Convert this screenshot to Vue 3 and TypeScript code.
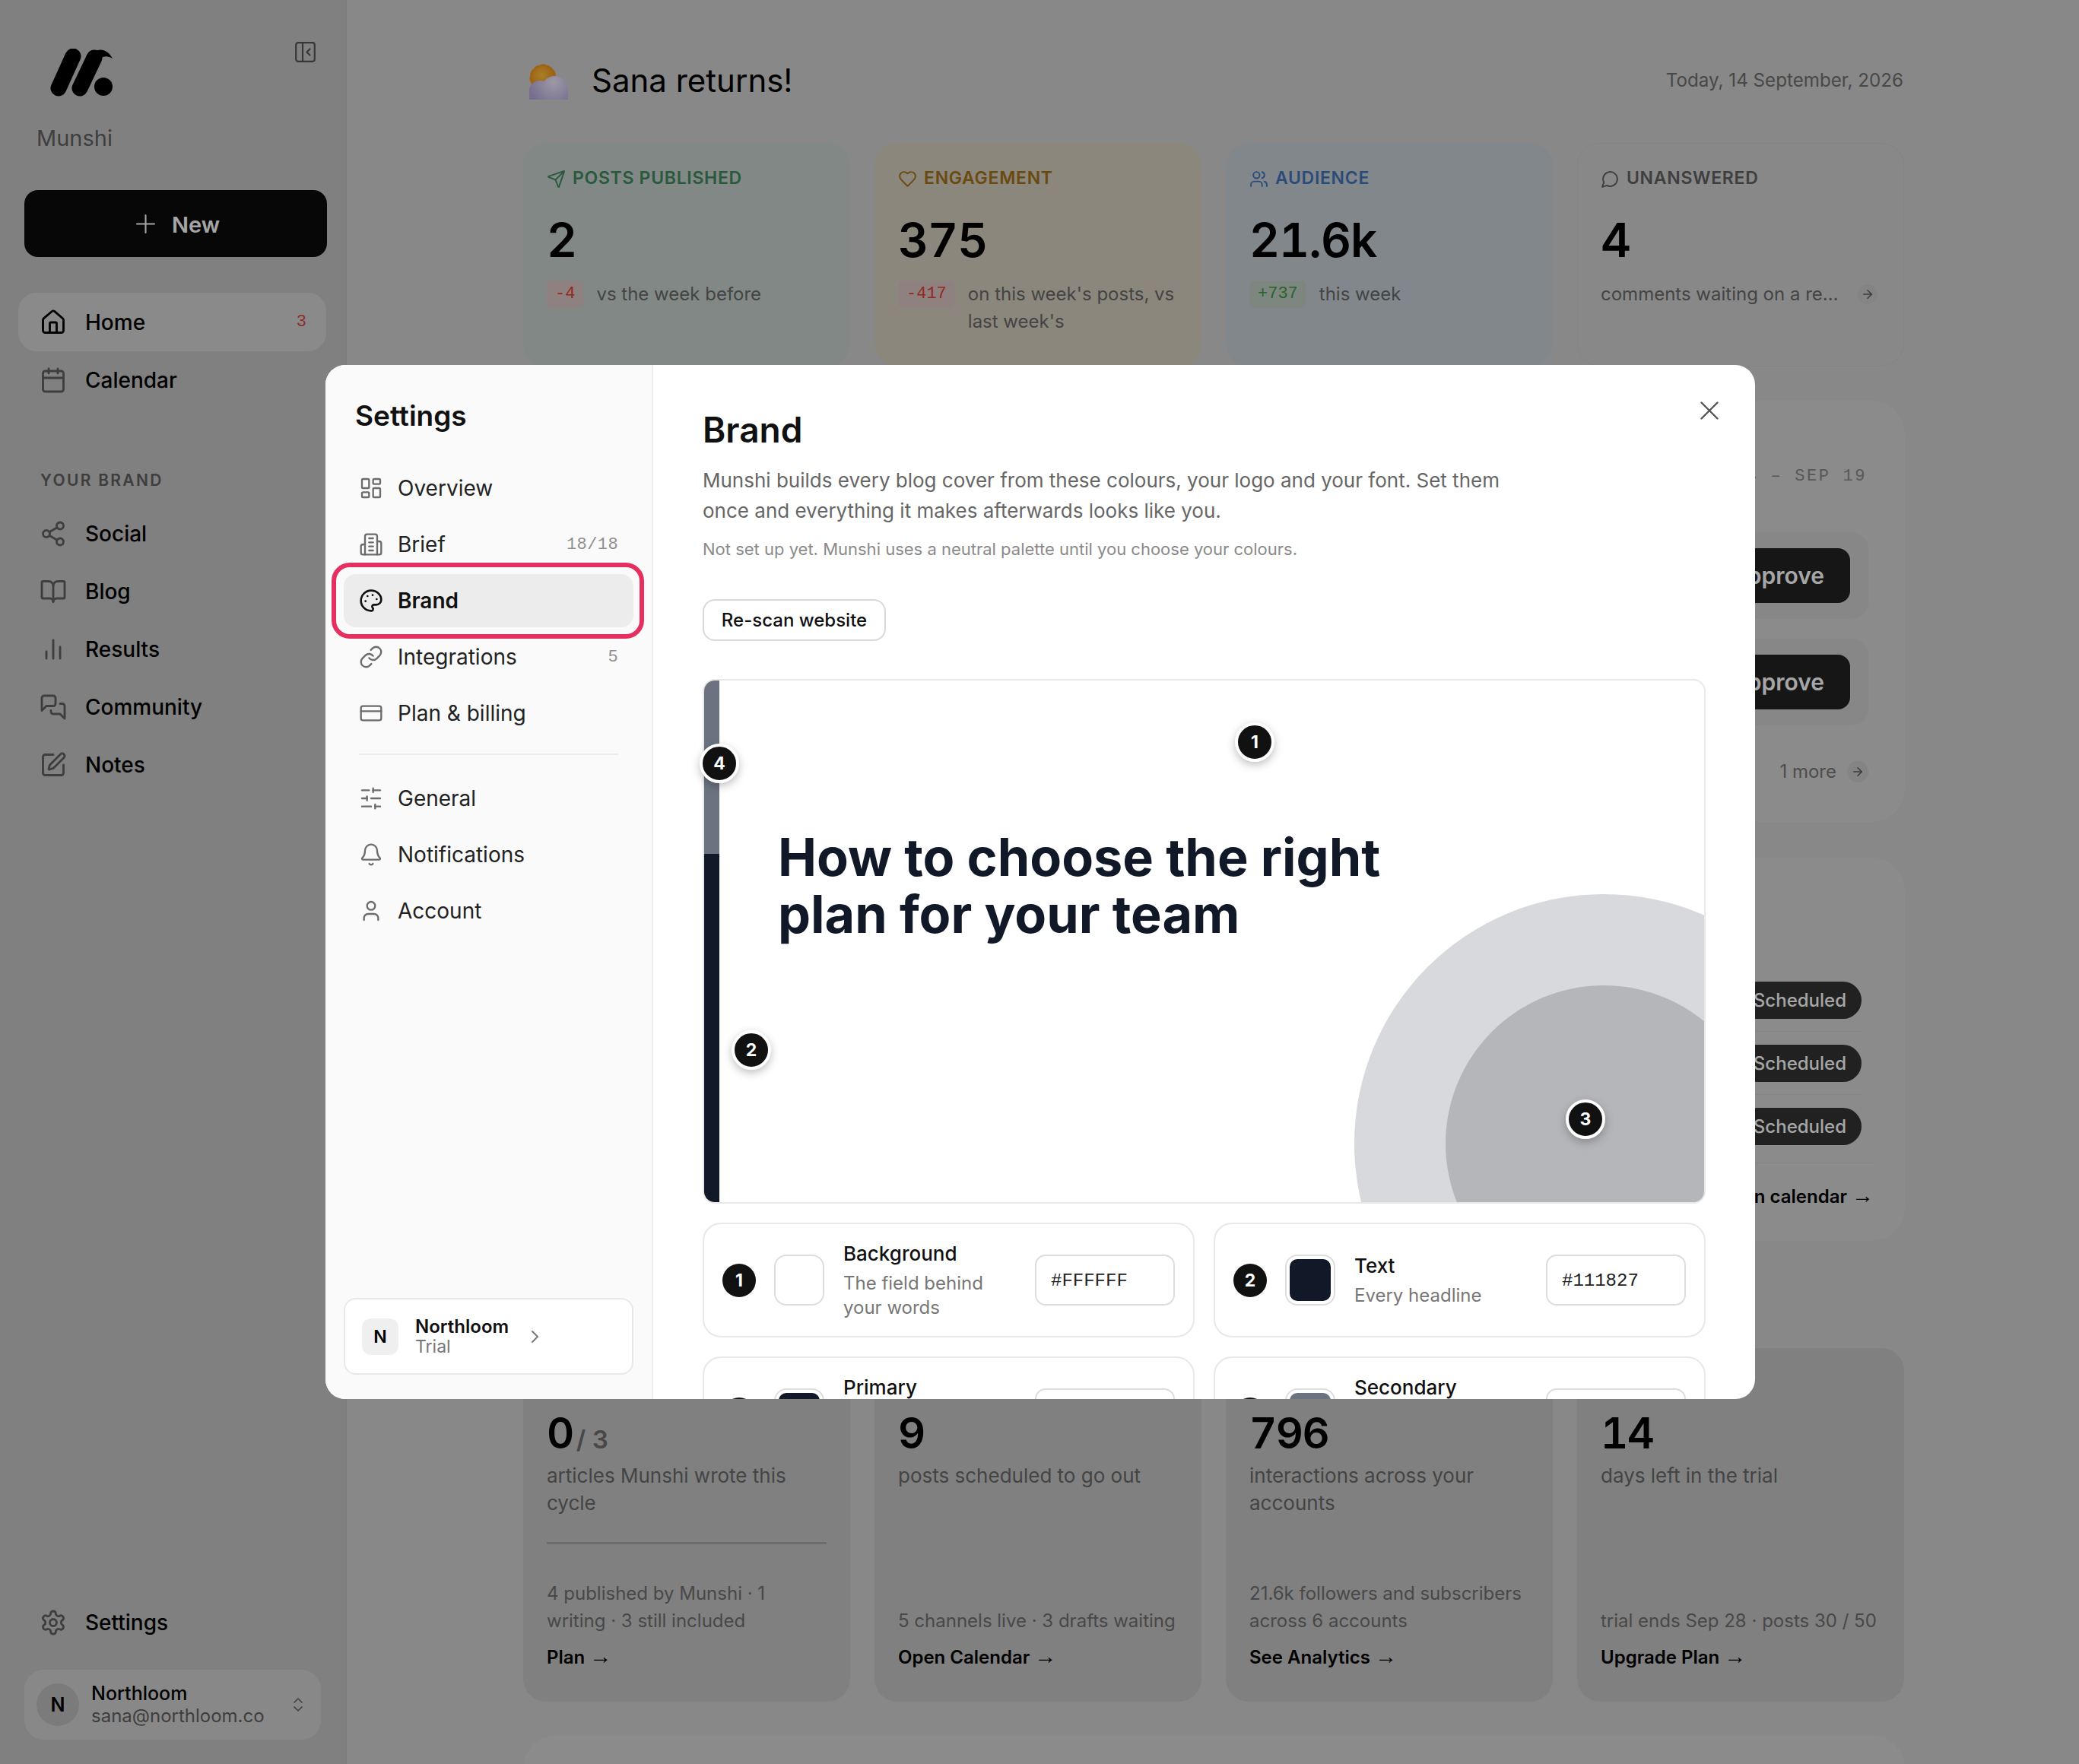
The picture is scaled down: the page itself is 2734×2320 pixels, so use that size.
<script setup lang="ts">
const icons: Record<string, string[]> = {
  home: ['M15 21v-8a1 1 0 0 0-1-1h-4a1 1 0 0 0-1 1v8', 'M3 10a2 2 0 0 1 .709-1.528l7-5.999a2 2 0 0 1 2.582 0l7 5.999A2 2 0 0 1 21 10v9a2 2 0 0 1-2 2H5a2 2 0 0 1-2-2z'],
  calendar: ['M8 2v4', 'M16 2v4', 'M5 4h14a2 2 0 0 1 2 2v14a2 2 0 0 1-2 2H5a2 2 0 0 1-2-2V6a2 2 0 0 1 2-2z', 'M3 10h18'],
  share: ['M21 5a3 3 0 1 1-6 0 3 3 0 1 1 6 0', 'M9 12a3 3 0 1 1-6 0 3 3 0 1 1 6 0', 'M21 19a3 3 0 1 1-6 0 3 3 0 1 1 6 0', 'M8.59 13.51l6.83 3.98', 'M15.41 6.51l-6.82 3.98'],
  book: ['M12 7v14', 'M3 18a1 1 0 0 1-1-1V4a1 1 0 0 1 1-1h5a4 4 0 0 1 4 4 4 4 0 0 1 4-4h5a1 1 0 0 1 1 1v13a1 1 0 0 1-1 1h-6a3 3 0 0 0-3 3 3 3 0 0 0-3-3z'],
  chart: ['M18 20V10', 'M12 20V4', 'M6 20v-6'],
  messages: ['M14 9a2 2 0 0 1-2 2H6l-4 4V4a2 2 0 0 1 2-2h8a2 2 0 0 1 2 2z', 'M18 9h2a2 2 0 0 1 2 2v11l-4-4h-6a2 2 0 0 1-2-2v-1'],
  pen: ['M12 3H5a2 2 0 0 0-2 2v14a2 2 0 0 0 2 2h14a2 2 0 0 0 2-2v-7', 'M18.375 2.625a1 1 0 0 1 3 3l-9.013 9.014a2 2 0 0 1-.853.505l-2.873.84a.5.5 0 0 1-.62-.62l.84-2.873a2 2 0 0 1 .506-.852z'],
  gear: ['M12.22 2h-.44a2 2 0 0 0-2 2v.18a2 2 0 0 1-1 1.73l-.43.25a2 2 0 0 1-2 0l-.15-.08a2 2 0 0 0-2.73.73l-.22.38a2 2 0 0 0 .73 2.73l.15.1a2 2 0 0 1 1 1.72v.51a2 2 0 0 1-1 1.74l-.15.09a2 2 0 0 0-.73 2.73l.22.38a2 2 0 0 0 2.73.73l.15-.08a2 2 0 0 1 2 0l.43.25a2 2 0 0 1 1 1.73V20a2 2 0 0 0 2 2h.44a2 2 0 0 0 2-2v-.18a2 2 0 0 1 1-1.73l.43-.25a2 2 0 0 1 2 0l.15.08a2 2 0 0 0 2.73-.73l.22-.39a2 2 0 0 0-.73-2.73l-.15-.08a2 2 0 0 1-1-1.74v-.5a2 2 0 0 1 1-1.74l.15-.09a2 2 0 0 0 .73-2.73l-.22-.38a2 2 0 0 0-2.73-.73l-.15.08a2 2 0 0 1-2 0l-.43-.25a2 2 0 0 1-1-1.73V4a2 2 0 0 0-2-2z', 'M15 12a3 3 0 1 1-6 0 3 3 0 1 1 6 0'],
  send: ['M14.536 21.686a.5.5 0 0 0 .937-.024l6.5-19a.496.496 0 0 0-.635-.635l-19 6.5a.5.5 0 0 0-.024.937l7.93 3.18a2 2 0 0 1 1.112 1.11z', 'm21.854 2.147-10.94 10.939'],
  heart: ['M19 14c1.49-1.46 3-3.21 3-5.5A5.5 5.5 0 0 0 16.5 3c-1.76 0-3 .5-4.5 2-1.5-1.5-2.74-2-4.5-2A5.5 5.5 0 0 0 2 8.5c0 2.3 1.5 4.05 3 5.5l7 7Z'],
  users: ['M16 21v-2a4 4 0 0 0-4-4H6a4 4 0 0 0-4 4v2', 'M13 7a4 4 0 1 1-8 0 4 4 0 1 1 8 0', 'M22 21v-2a4 4 0 0 0-3-3.87', 'M16 3.13a4 4 0 0 1 0 7.75'],
  bubble: ['M7.9 20A9 9 0 1 0 4 16.1L2 22Z'],
  arrow: ['M5 12h14', 'm12 5 7 7-7 7'],
  dashboard: ['M4 3h5a1 1 0 0 1 1 1v7a1 1 0 0 1-1 1H4a1 1 0 0 1-1-1V4a1 1 0 0 1 1-1z', 'M15 3h5a1 1 0 0 1 1 1v3a1 1 0 0 1-1 1h-5a1 1 0 0 1-1-1V4a1 1 0 0 1 1-1z', 'M15 12h5a1 1 0 0 1 1 1v7a1 1 0 0 1-1 1h-5a1 1 0 0 1-1-1v-7a1 1 0 0 1 1-1z', 'M4 16h5a1 1 0 0 1 1 1v3a1 1 0 0 1-1 1H4a1 1 0 0 1-1-1v-3a1 1 0 0 1 1-1z'],
  building: ['M6 22V4a2 2 0 0 1 2-2h8a2 2 0 0 1 2 2v18Z', 'M6 12H4a2 2 0 0 0-2 2v6a2 2 0 0 0 2 2h2', 'M18 9h2a2 2 0 0 1 2 2v9a2 2 0 0 1-2 2h-2', 'M10 6h4', 'M10 10h4', 'M10 14h4', 'M10 18h4'],
  palette: ['M12 22a1 1 0 0 1 0-20 10 9 0 0 1 10 9 5 5 0 0 1-5 5h-2.25a1.75 1.75 0 0 0-1.4 2.8l.3.4a1.75 1.75 0 0 1-1.4 2.8z', 'M13.5 6.5h.01', 'M17.5 10.5h.01', 'M6.5 12.5h.01', 'M8.5 7.5h.01'],
  link: ['M10 13a5 5 0 0 0 7.54.54l3-3a5 5 0 0 0-7.07-7.07l-1.72 1.71', 'M14 11a5 5 0 0 0-7.54-.54l-3 3a5 5 0 0 0 7.07 7.07l1.71-1.71'],
  card: ['M4 5h16a2 2 0 0 1 2 2v10a2 2 0 0 1-2 2H4a2 2 0 0 1-2-2V7a2 2 0 0 1 2-2z', 'M2 10h20'],
  sliders: ['M21 4h-7', 'M10 4H3', 'M21 12h-9', 'M8 12H3', 'M21 20h-5', 'M12 20H3', 'M14 2v4', 'M8 10v4', 'M16 18v4'],
  bell: ['M10.268 21a2 2 0 0 0 3.464 0', 'M3.262 15.326A1 1 0 0 0 4 17h16a1 1 0 0 0 .74-1.673C19.41 13.956 18 12.499 18 8A6 6 0 0 0 6 8c0 4.499-1.411 5.956-2.738 7.326'],
  user: ['M19 21v-2a4 4 0 0 0-4-4H9a4 4 0 0 0-4 4v2', 'M16 7a4 4 0 1 1-8 0 4 4 0 1 1 8 0'],
}

const mainNav = [
  { label: 'Home', icon: 'home', active: true, count: '3' },
  { label: 'Calendar', icon: 'calendar' },
]
const brandNav = [
  { label: 'Social', icon: 'share' },
  { label: 'Blog', icon: 'book' },
  { label: 'Results', icon: 'chart' },
  { label: 'Community', icon: 'messages' },
  { label: 'Notes', icon: 'pen' },
]

const stats = [
  { key: 'green', label: 'POSTS PUBLISHED', icon: 'send', value: '2', delta: '-4', dir: 'down', text: 'vs the week before' },
  { key: 'amber', label: 'ENGAGEMENT', icon: 'heart', value: '375', delta: '-417', dir: 'down', text: "on this week's posts, vs last week's" },
  { key: 'blue', label: 'AUDIENCE', icon: 'users', value: '21.6k', delta: '+737', dir: 'up', text: 'this week' },
]

const summary = [
  { value: '0', of: '/ 3', text: 'articles Munshi wrote this cycle', foot: '4 published by Munshi · 1 writing · 3 still included', link: 'Plan', progress: true },
  { value: '9', text: 'posts scheduled to go out', foot: '5 channels live · 3 drafts waiting', link: 'Open Calendar' },
  { value: '796', text: 'interactions across your accounts', foot: '21.6k followers and subscribers across 6 accounts', link: 'See Analytics' },
  { value: '14', text: 'days left in the trial', foot: 'trial ends Sep 28 · posts 30 / 50', link: 'Upgrade Plan' },
]

const settingsTop = [
  { label: 'Overview', icon: 'dashboard' },
  { label: 'Brief', icon: 'building', count: '18/18' },
  { label: 'Brand', icon: 'palette', active: true },
  { label: 'Integrations', icon: 'link', count: '5' },
  { label: 'Plan & billing', icon: 'card' },
]
const settingsBottom = [
  { label: 'General', icon: 'sliders' },
  { label: 'Notifications', icon: 'bell' },
  { label: 'Account', icon: 'user' },
]

const colours = [
  { n: 1, name: 'Background', desc: 'The field behind your words', hex: '#FFFFFF' },
  { n: 2, name: 'Text', desc: 'Every headline', hex: '#111827' },
  { n: 3, name: 'Primary', desc: 'The big shapes on each cover', hex: '#111827' },
  { n: 4, name: 'Secondary', desc: 'The stripe along the edge', hex: '#6B7280' },
]
</script>

<template>
  <div class="page">
    <aside class="side">
      <div class="brand-top">
        <svg class="logo" viewBox="0 0 84 64" aria-hidden="true">
          <path d="M11 52 L30 10" class="logo-stroke" />
          <path d="M39 52 L58 12" class="logo-stroke" />
          <path d="M50 15 C58 -3 74 -2 82 13 C72 7 65 11 60 22 Z" fill="#000" />
          <circle cx="70" cy="50" r="12" fill="#000" />
        </svg>
        <svg class="collapse" viewBox="0 0 27 27" aria-hidden="true">
          <rect x="1.2" y="1.2" width="24.6" height="24.6" rx="3" />
          <path d="M10 1.2v24.6" />
          <path d="M19.5 9.5l-4 4 4 4" />
        </svg>
      </div>
      <div class="brand-name">Munshi</div>
      <button class="new-btn">
        <svg class="new-plus" viewBox="0 0 24 24"><path d="M12 1v22M1 12h22" /></svg>
        New
      </button>
      <nav class="nav">
        <a v-for="item in mainNav" :key="item.label" :class="['nav-item', { active: item.active }]">
          <svg class="nav-ico" viewBox="0 0 24 24"><path v-for="d in icons[item.icon]" :key="d" :d="d" /></svg>
          <span class="nav-label">{{ item.label }}</span>
          <span v-if="item.count" class="nav-count">{{ item.count }}</span>
        </a>
      </nav>
      <div class="nav-heading">YOUR BRAND</div>
      <nav class="nav">
        <a v-for="item in brandNav" :key="item.label" class="nav-item">
          <svg class="nav-ico" viewBox="0 0 24 24"><path v-for="d in icons[item.icon]" :key="d" :d="d" /></svg>
          <span class="nav-label">{{ item.label }}</span>
        </a>
      </nav>
      <div class="side-foot">
        <a class="nav-item">
          <svg class="nav-ico" viewBox="0 0 24 24"><path v-for="d in icons.gear" :key="d" :d="d" /></svg>
          <span class="nav-label">Settings</span>
        </a>
        <div class="acct">
          <span class="acct-avatar">N</span>
          <span class="acct-text">
            <span class="acct-name">Northloom</span>
            <span class="acct-mail">sana@northloom.co</span>
          </span>
          <svg class="acct-chev" viewBox="0 0 24 24"><path d="m7 15 5 5 5-5" /><path d="m7 9 5-5 5 5" /></svg>
        </div>
      </div>
    </aside>

    <main class="main">
      <header class="head">
        <svg class="weather" viewBox="0 0 52 47" aria-hidden="true">
          <defs>
            <radialGradient id="sunFill" cx="45%" cy="40%" r="65%">
              <stop offset="0" stop-color="#ffc53a" />
              <stop offset="1" stop-color="#f28a1a" />
            </radialGradient>
            <radialGradient id="cloudFill" gradientUnits="userSpaceOnUse" cx="32" cy="24" r="34">
              <stop offset="0" stop-color="#f0ebff" />
              <stop offset="1" stop-color="#b5a8dc" />
            </radialGradient>
          </defs>
          <circle cx="18" cy="18" r="15.5" fill="url(#sunFill)" />
          <circle cx="18" cy="18" r="16" fill="none" stroke="#f59a1e" stroke-width="3" stroke-dasharray="6 3" />
          <path d="M14 22a14 14 0 0 1 5 .9A18 18 0 0 1 51 32v15H0V36a14 14 0 0 1 14-14z" fill="url(#cloudFill)" />
        </svg>
        <h1 class="greeting">Sana returns!</h1>
        <span class="today">Today, 14 September, 2026</span>
      </header>

      <section class="stat-row">
        <div v-for="s in stats" :key="s.key" :class="['stat', s.key]">
          <div class="stat-label">
            <svg class="stat-ico" viewBox="0 0 24 24"><path v-for="d in icons[s.icon]" :key="d" :d="d" /></svg>
            {{ s.label }}
          </div>
          <div class="stat-value">{{ s.value }}</div>
          <div class="stat-foot">
            <span :class="['chip', s.dir]">{{ s.delta }}</span>
            <span class="stat-text">{{ s.text }}</span>
          </div>
        </div>
        <div class="stat plain">
          <div class="stat-label">
            <svg class="stat-ico" viewBox="0 0 24 24"><path v-for="d in icons.bubble" :key="d" :d="d" /></svg>
            UNANSWERED
          </div>
          <div class="stat-value">4</div>
          <div class="stat-foot nowrap">
            <span class="stat-clip">comments waiting on a reply</span>
            <span class="arrow-dot">
              <svg viewBox="0 0 24 24"><path v-for="d in icons.arrow" :key="d" :d="d" /></svg>
            </span>
          </div>
        </div>
      </section>

      <section class="panel approvals">
        <div class="range">SEP 14 – SEP 19</div>
        <div v-for="n in 2" :key="n" class="approve-row">
          <button class="approve-btn">Approve</button>
        </div>
        <div class="more">
          1 more
          <span class="arrow-dot wide">
            <svg viewBox="0 0 24 24"><path v-for="d in icons.arrow" :key="d" :d="d" /></svg>
          </span>
        </div>
      </section>

      <section class="panel upcoming">
        <div v-for="n in 3" :key="n" :class="['sched-row', { last: n === 3 }]">
          <span class="pill">Scheduled</span>
        </div>
        <div class="open-link">Open calendar <span class="arr">→</span></div>
      </section>

      <section class="sum-row">
        <div v-for="c in summary" :key="c.link" class="sum">
          <div class="sum-value">{{ c.value }}<span v-if="c.of" class="sum-of"> {{ c.of }}</span></div>
          <div class="sum-text">{{ c.text }}</div>
          <div v-if="c.progress" class="sum-bar"></div>
          <div class="sum-foot">{{ c.foot }}</div>
          <div class="sum-link">{{ c.link }} <span class="arr">→</span></div>
        </div>
      </section>

      <section class="panel last-panel"></section>
    </main>

    <div class="backdrop">
      <div class="modal">
        <aside class="set-side">
          <div class="set-title">Settings</div>
          <div class="set-list">
            <a v-for="item in settingsTop" :key="item.label" :class="['set-item', { active: item.active }]">
              <svg class="set-ico" viewBox="0 0 24 24"><path v-for="d in icons[item.icon]" :key="d" :d="d" /></svg>
              <span class="set-label">{{ item.label }}</span>
              <span v-if="item.count" class="set-count">{{ item.count }}</span>
              <span v-if="item.active" class="highlight"></span>
            </a>
          </div>
          <div class="set-sep"></div>
          <div class="set-list">
            <a v-for="item in settingsBottom" :key="item.label" class="set-item">
              <svg class="set-ico" viewBox="0 0 24 24"><path v-for="d in icons[item.icon]" :key="d" :d="d" /></svg>
              <span class="set-label">{{ item.label }}</span>
            </a>
          </div>
          <div class="org">
            <span class="org-avatar">N</span>
            <span class="org-text">
              <span class="org-name">Northloom</span>
              <span class="org-plan">Trial</span>
            </span>
            <svg class="org-chev" viewBox="0 0 24 24"><path d="m9 5 7 7-7 7" /></svg>
          </div>
        </aside>

        <div class="set-body">
          <svg class="close" viewBox="0 0 24 24"><path d="M1.5 1.5l21 21M22.5 1.5l-21 21" /></svg>
          <h2 class="body-title">Brand</h2>
          <p class="body-desc">Munshi builds every blog cover from these colours, your logo and your font. Set them once and everything it makes afterwards looks like you.</p>
          <p class="body-note">Not set up yet. Munshi uses a neutral palette until you choose your colours.</p>
          <button class="rescan">Re-scan website</button>

          <div class="cover">
            <div class="cover-bar"></div>
            <div class="cover-art">
              <span class="ring outer"></span>
              <span class="ring inner"></span>
              <h3 class="cover-title">How to choose the right plan for your team</h3>
            </div>
            <span class="pin pin-1">1</span>
            <span class="pin pin-2">2</span>
            <span class="pin pin-3">3</span>
            <span class="pin pin-4">4</span>
          </div>

          <div class="swatches">
            <div v-for="c in colours" :key="c.n" class="swatch-card">
              <span class="num">{{ c.n }}</span>
              <span class="swatch"><span class="swatch-fill" :style="{ background: c.hex }"></span></span>
              <span class="swatch-text">
                <span class="swatch-name">{{ c.name }}</span>
                <span class="swatch-desc">{{ c.desc }}</span>
              </span>
              <span class="hex">{{ c.hex }}</span>
            </div>
          </div>
        </div>
      </div>
    </div>
  </div>
</template>

<style>
html, body { margin: 0; background: #d1d1d1; }
</style>

<style scoped>
.page {
  position: relative;
  display: flex;
  width: 2734px;
  height: 2320px;
  overflow: hidden;
  background: #d1d1d1;
  font-family: Inter, "Noto Sans", sans-serif;
  color: #000;
}
svg { fill: none; stroke: currentColor; stroke-linecap: round; stroke-linejoin: round; flex: none; }

/* left rail */
.side {
  width: 456px;
  flex: none;
  box-sizing: border-box;
  height: 100%;
  background: #c5c5c5;
  padding: 0 26px 32px 24px;
  display: flex;
  flex-direction: column;
  border-right: 1px solid #bfbfbf;
}
.brand-top { display: flex; justify-content: space-between; padding: 55px 14px 0 42px; height: 72px; }
.logo { width: 84px; height: 64px; margin-top: 9px; stroke: none; }
.logo-stroke { stroke: #000; stroke-width: 21; fill: none; }
.collapse { width: 27px; height: 27px; margin: 0; color: #555; stroke-width: 2.2; }
.brand-name { font-size: 29px; line-height: 36px; margin: 37px 0 0 24px; color: #616161; }
.new-btn {
  margin: 50px 0 47px 8px;
  width: 398px;
  height: 88px;
  border: 0;
  border-radius: 18px;
  background: #0b0b0b;
  color: #fff;
  font: 600 29px Inter, sans-serif;
  display: flex;
  align-items: center;
  justify-content: center;
  gap: 22px;
  padding: 2px 0 0 10px;
}
.new-plus { width: 25px; height: 25px; stroke-width: 2; margin: -2px 0 0 -4px; }
.nav { display: flex; flex-direction: column; }
.nav-item {
  display: flex;
  align-items: center;
  height: 76px;
  box-sizing: border-box;
  padding: 0 26px 0 28px;
  border-radius: 24px;
  font-size: 28px;
  font-weight: 500;
  color: #000;
}
.nav-item.active { background: #d4d4d4; height: 77px; }
.nav-ico { width: 36px; height: 36px; stroke-width: 1.9; color: #606060; margin-right: 24px; }
.active .nav-ico { color: #000; }
.nav-label { flex: 1; }
.nav-count { font: 500 22px "Liberation Mono", monospace; color: #d54a4a; }
.nav-heading {
  margin: 81px 0 0 29px;
  height: 45px;
  font-size: 21px;
  font-weight: 600;
  letter-spacing: 2.3px;
  color: #606060;
  line-height: 26px;
}
.side-foot { margin-top: auto; display: flex; flex-direction: column; gap: 24px; }
.acct {
  margin-left: 8px;
  width: 390px;
  height: 92px;
  box-sizing: border-box;
  border-radius: 26px;
  background: #d2d2d2;
  display: flex;
  align-items: center;
  padding: 0 18px 0 16px;
}
.acct-avatar {
  width: 56px;
  height: 56px;
  border-radius: 50%;
  background: #bdbdbd;
  display: flex;
  align-items: center;
  justify-content: center;
  font-size: 25px;
  font-weight: 600;
  flex: none;
}
.acct-text { display: flex; flex-direction: column; margin-left: 16px; flex: 1; }
.acct-name { font-size: 25px; font-weight: 500; line-height: 30px; }
.acct-mail { font-size: 24px; line-height: 30px; color: #606060; }
.acct-chev { width: 24px; height: 28px; color: #666; stroke-width: 1.7; }

/* main */
.main { flex: 1; min-width: 0; padding: 80px 229px 0 232px; }
.head { display: flex; align-items: center; height: 53px; }
.weather { width: 52px; height: 47px; stroke: none; margin: 4px 0 0 8px; align-self: flex-start; }
.greeting { font-size: 42px; font-weight: 400; margin: -2px 0 0 30px; flex: 1; line-height: 53px; }
.today { font-size: 24.2px; color: #6f6f6f; margin: -3px 2px 0 0; }

.stat-row { display: grid; grid-template-columns: repeat(4, 430px); gap: 32px; margin-top: 55px; }
.stat { height: 294px; box-sizing: border-box; border-radius: 30px; padding: 31px; }
.stat.green { background: #c8d2ce; }
.stat.amber { background: #d6cfc1; }
.stat.blue { background: #c8d0d6; }
.stat.plain { border: 1px solid #cbcbcb; padding: 30px; }
.stat-label { display: flex; align-items: center; gap: 9px; font-size: 23px; font-weight: 600; letter-spacing: .7px; line-height: 30px; }
.stat-ico { width: 25px; height: 25px; stroke-width: 1.9; margin-top: 3px; }
.green .stat-label { color: #3f8a5e; }
.amber .stat-label { color: #a57219; }
.blue .stat-label { color: #4274b8; }
.plain .stat-label { color: #616161; }
.stat-value { font-size: 62px; font-weight: 600; letter-spacing: -1px; line-height: 80px; margin-top: 27px; font-variant-numeric: tabular-nums; }
.stat-foot { display: flex; gap: 17px; margin-top: 13px; font-size: 24px; line-height: 36px; color: #696969; }
.chip { flex: none; height: 36px; padding: 0 11px; border-radius: 8px; font: 400 22px/36px "Liberation Mono", monospace; }
.chip.down { background: #dac6c5; color: #e53e31; }
.chip.up { background: #c0cfc3; color: #3e9a4a; }
.stat-foot.nowrap { gap: 22px; align-items: center; }
.stat-clip { width: 316px; overflow: hidden; white-space: nowrap; text-overflow: ellipsis; }
.arrow-dot { display: inline-flex; align-items: center; justify-content: center; width: 26px; height: 26px; border-radius: 50%; background: #cbcbcb; color: #5a5a5a; flex: none; }
.arrow-dot svg { width: 18px; height: 18px; stroke-width: 2; }

.panel { background: #d6d6d6; border-radius: 44px; box-sizing: border-box; }
.approvals { margin-top: 45px; height: 554px; padding: 85px 48px 0; display: flex; flex-direction: column; align-items: stretch; }
.range { text-align: right; font: 400 22px/30px "Liberation Mono", monospace; letter-spacing: 2.6px; color: #888; padding-right: 2px; }
.approve-row { margin-top: 26px; height: 114px; background: #d0d0d0; border-radius: 22px; display: flex; align-items: center; justify-content: flex-end; padding-right: 24px; box-sizing: border-box; }
.range + .approve-row { margin-top: 58px; }
.approve-btn { height: 72px; padding: 0 34px; border: 0; border-radius: 16px; background: #222; color: #fff; font: 600 30px Inter, sans-serif; }
.more { display: flex; justify-content: flex-end; align-items: center; gap: 14px; margin-top: 46px; font-size: 24px; color: #777; }
.arrow-dot.wide { width: 28px; height: 28px; }

.upcoming { margin-top: 47px; height: 504px; padding: 163px 41px 0; display: flex; flex-direction: column; }
.sched-row { height: 83px; margin-right: 16px; display: flex; align-items: flex-start; justify-content: flex-end; padding-top: 17px; margin-top: -17px; margin-bottom: 17px; border-bottom: 1px solid #cdcdcd; box-sizing: border-box; }
.sched-row.last { margin-right: 0; height: 90px; padding-right: 16px; margin-bottom: 0; }
.pill { height: 49px; padding: 0 20px; border-radius: 25px; background: #333; color: #fff; font-size: 24px; font-weight: 500; line-height: 49px; }
.open-link { text-align: right; font-size: 24px; font-weight: 600; margin-top: 29px; }
.arr { font-family: "Liberation Sans", sans-serif; font-size: 29px; line-height: 0; }

.sum-row { display: grid; grid-template-columns: repeat(4, 430px); gap: 32px; margin-top: 141px; }
.sum { height: 465px; box-sizing: border-box; border-radius: 30px; background: #c5c5c5; padding: 84px 31px 40px; display: flex; flex-direction: column; }
.sum-value { height: 56px; font-size: 56px; font-weight: 600; letter-spacing: -1.5px; line-height: 56px; font-variant-numeric: tabular-nums; }
.sum-of { font-size: 33px; letter-spacing: 0; color: #6e6e6e; line-height: 0; margin-left: 4px; }
.sum-text { font-size: 26px; line-height: 36px; color: #696969; margin-top: 10px; }
.sum-bar { height: 3px; background: #a8a8a8; margin-top: 33px; }
.sum-foot { margin-top: auto; font-size: 24px; line-height: 36px; color: #6f6f6f; }
.sum-link { font-size: 24px; font-weight: 600; line-height: 36px; margin-top: 12px; }
.last-panel { margin-top: 44px; height: 200px; }

/* dialog */
.backdrop { position: absolute; inset: 0; background: rgba(0, 0, 0, .35); display: flex; align-items: center; justify-content: center; padding-left: 2px; }
.modal { width: 1880px; height: 1360px; flex: none; background: #fff; border-radius: 26px; overflow: hidden; display: flex; }
.set-side { width: 431px; flex: none; box-sizing: border-box; background: #fafafa; border-right: 2px solid #eee; padding: 45px 24px 32px; display: flex; flex-direction: column; }
.set-title { font-size: 37px; font-weight: 600; line-height: 44px; color: #111; padding-left: 15px; margin-bottom: 38px; }
.set-list { display: flex; flex-direction: column; gap: 4px; }
.set-item { position: relative; display: flex; align-items: center; height: 70px; padding: 0 20px; border-radius: 16px; font-size: 28px; color: #222; }
.set-item.active { background: #ececec; font-weight: 600; color: #111; }
.set-ico { width: 32px; height: 32px; stroke-width: 1.75; color: #6b6b6b; margin-right: 19px; }
.active .set-ico { color: #111; stroke-width: 2; }
.set-label { flex: 1; }
.set-count { font: 400 22px "Liberation Mono", monospace; color: #8f8f8f; letter-spacing: .4px; }
.highlight { position: absolute; top: -15px; bottom: -15px; left: -16px; right: -14px; border: 6px solid #e5305f; border-radius: 24px; pointer-events: none; }
.set-sep { height: 2px; background: #ececec; margin: 18px 20px 22px; }
.org { margin-top: auto; height: 101px; box-sizing: border-box; background: #fff; border: 2px solid #e8e8e8; border-radius: 16px; display: flex; align-items: center; padding: 0 22px; }
.org-avatar { width: 48px; height: 48px; background: #efefef; border-radius: 12px; display: flex; align-items: center; justify-content: center; font-size: 23px; font-weight: 600; flex: none; }
.org-text { display: flex; flex-direction: column; margin-left: 22px; }
.org-name { font-size: 24px; font-weight: 600; line-height: 26px; color: #111; }
.org-plan { font-size: 23px; line-height: 26px; color: #777; }
.org-chev { width: 24px; height: 24px; margin-left: 22px; color: #777; stroke-width: 2; }

.set-body { position: relative; flex: 1; min-width: 0; padding: 58px 65px 0; overflow: hidden; }
.close { position: absolute; top: 48px; right: 48px; width: 24px; height: 24px; color: #555; stroke-width: 2.4; }
.body-title { margin: 0; font-size: 46px; font-weight: 600; line-height: 54px; color: #111; }
.body-desc { margin: 20px 0 0; max-width: 1060px; font-size: 26px; line-height: 40px; color: #666; }
.body-note { margin: 15px 0 0; font-size: 22px; line-height: 30px; color: #8a8a8a; }
.rescan { display: block; margin: 51px 0 0; width: 241px; height: 55px; background: #fff; border: 2px solid #d8d8d8; border-radius: 16px; font: 500 24px Inter, sans-serif; color: #111; padding: 0; }
.cover { position: relative; margin-top: 50px; height: 690px; box-sizing: border-box; border: 2px solid #e8e8e8; border-radius: 16px; display: flex; background: #fff; }
.cover-bar { width: 20px; flex: none; border-radius: 14px 0 0 14px; background: linear-gradient(#6b7280 0 228px, #111827 228px); }
.cover-art { position: relative; flex: 1; overflow: hidden; border-radius: 0 14px 14px 0; }
.ring { position: absolute; border-radius: 50%; }
.ring.outer { width: 656px; height: 656px; left: 835px; top: 281px; background: #d8d9dc; }
.ring.inner { width: 416px; height: 416px; left: 955px; top: 401px; background: #b5b6ba; }
.cover-title { position: relative; margin: 195px 0 0 77px; width: 870px; font-size: 68.3px; font-weight: 700; line-height: 75px; color: #111827; }
.pin { position: absolute; width: 44px; height: 44px; border-radius: 50%; background: #111; color: #fff; border: 4px solid #fff; box-shadow: 0 4px 12px rgba(0,0,0,.25); font-size: 23px; font-weight: 700; display: flex; align-items: center; justify-content: center; }
.pin-1 { left: 698px; top: 55px; }
.pin-2 { left: 36px; top: 460px; }
.pin-3 { left: 1133px; top: 551px; }
.pin-4 { left: -6px; top: 83px; }
.swatches { display: grid; grid-template-columns: 647px 647px; gap: 25px; margin-top: 25px; }
.swatch-card { display: flex; align-items: center; height: 151px; box-sizing: border-box; border: 2px solid #e8e8e8; border-radius: 24px; padding: 0 24px; }
.num { width: 44px; height: 44px; border-radius: 50%; background: #111; color: #fff; font-size: 23px; font-weight: 700; display: flex; align-items: center; justify-content: center; flex: none; }
.swatch { width: 66px; height: 67px; box-sizing: border-box; margin-left: 24px; border: 2px solid #ddd; border-radius: 16px; padding: 4px; flex: none; }
.swatch-fill { display: block; width: 100%; height: 100%; border-radius: 10px; }
.swatch-text { display: flex; flex-direction: column; margin-left: 25px; width: 228px; flex: none; }
.swatch-name { font-size: 26px; font-weight: 500; line-height: 34px; color: #111; }
.swatch-desc { font-size: 24px; line-height: 32px; color: #777; margin-top: 6px; }
.hex { width: 184px; height: 67px; box-sizing: border-box; margin-left: auto; border: 2px solid #ddd; border-radius: 14px; padding-left: 19px; font: 400 24px/65px "Liberation Mono", monospace; color: #222; flex: none; }
</style>
